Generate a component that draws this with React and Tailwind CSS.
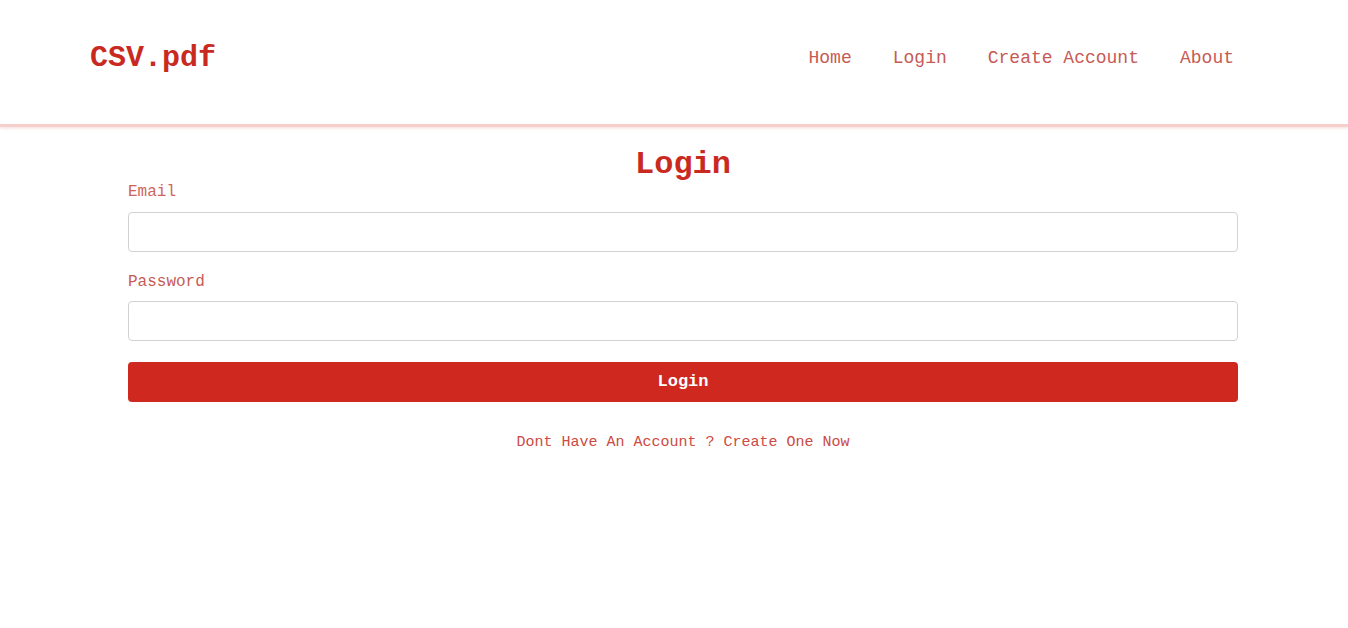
const mono = { fontFamily: '"Liberation Mono", "Courier New", monospace' };

const links = ["Home", "Login", "Create Account", "About"];

export default function App() {
  return (
    <div className="min-h-[628px] bg-white font-['Liberation_Mono',monospace]">
      <header className="h-[127px] flex items-center justify-between pl-[90px] pr-[94px] border-b-[3px] border-[#f6cfcd] shadow-[0_1px_3px_rgba(230,150,150,0.35)]">
        <a className="text-[30px] font-bold text-[#c92a1f] leading-none -mt-[8px]">CSV.pdf</a>
        <nav className="flex items-center -mt-[8px] gap-[1px]">
          {links.map((l) => (
            <a key={l} className="px-5 text-[18px] text-[#c65a54] leading-none">
              {l}
            </a>
          ))}
        </nav>
      </header>

      <main className="ml-[128px] w-[1110px] pt-[20px]">
        <h1 className="text-center text-[32px] font-bold text-[#c92a1f] leading-[36px]">Login</h1>
        <form className="flex flex-col">
          <label className="text-[16px] text-[#d06458] leading-[18px] mb-[11px]">Email</label>
          <input type="email" className="h-[40px] w-full rounded-[4px] border border-[#d2d2d2] px-3 outline-none" />
          <label className="mt-[21px] text-[16px] text-[#c65a54] leading-[18px] mb-[10px]">Password</label>
          <input type="password" className="h-[40px] w-full rounded-[4px] border border-[#d2d2d2] px-3 outline-none" />
          <button type="button" className="mt-[21px] h-[40px] w-full rounded-[4px] bg-[#cf281e] text-white text-[17px] font-bold">
            Login
          </button>
        </form>
        <p className="mt-[32px] text-center text-[15px] text-[#cc4a42] leading-[18px]" style={mono}>
          Dont Have An Account ? Create One Now
        </p>
      </main>
    </div>
  );
}
